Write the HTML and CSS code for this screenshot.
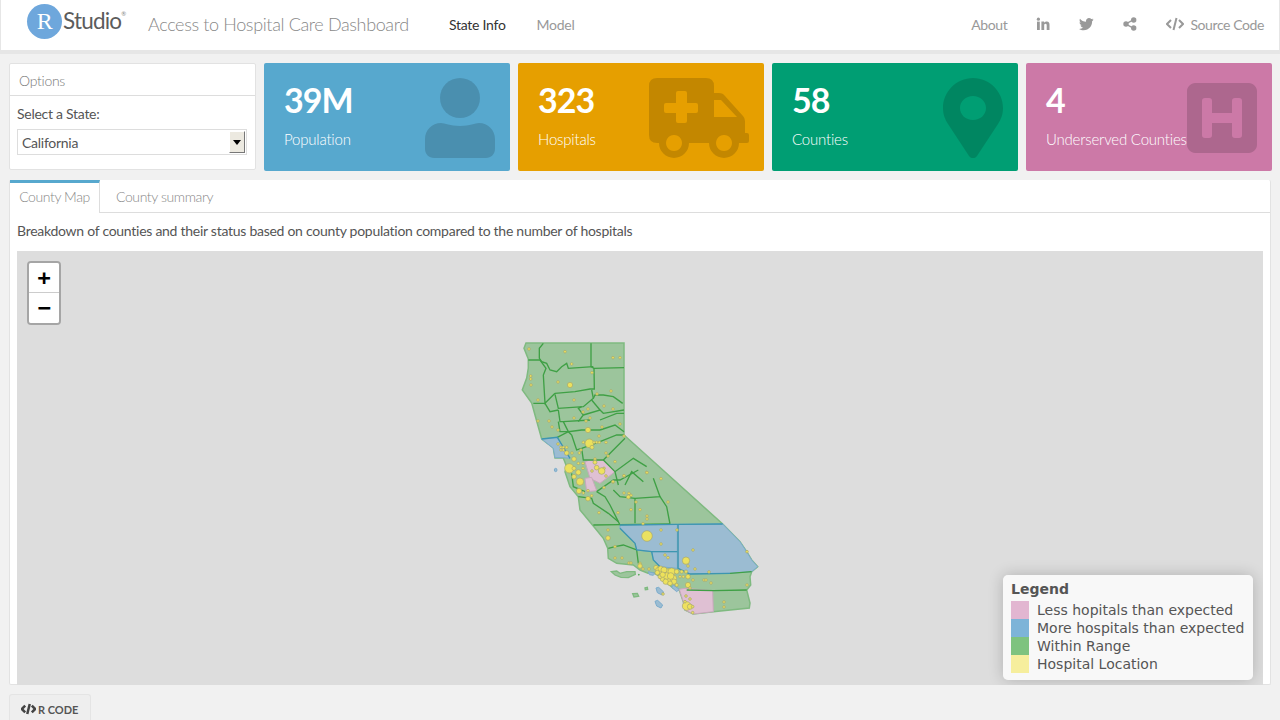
FILE: index.html
```html
<!DOCTYPE html>
<html lang="en">
<head>
<meta charset="utf-8">
<title>Access to Hospital Care Dashboard</title>
<link rel="stylesheet" href="styles.css">
</head>
<body>

<header class="navbar">
  <div class="logo">
    <span class="logo-r">R</span><span class="logo-word">Studio</span><span class="logo-reg">&reg;</span>
  </div>
  <div class="nav-title">Access to Hospital Care Dashboard</div>
  <nav class="nav-left">
    <a class="active">State Info</a>
    <a>Model</a>
  </nav>
  <nav class="nav-right">
    <a>About</a>
    <a class="icon-link">
      <svg width="14" height="14" viewBox="0 0 14 14"><rect x="1" y="4.600" width="2.800" height="8.400"/><circle cx="2.400" cy="2.200" r="1.600"/><path d="M5.400 4.600h2.700v1.200c.5-.8 1.400-1.400 2.600-1.400 2.300 0 2.800 1.500 2.800 3.500V13h-2.800V8.500c0-1-.2-1.800-1.200-1.800-1.100 0-1.300.8-1.300 1.800V13H5.400z"/></svg>
    </a>
    <a class="icon-link">
      <svg width="15" height="14" viewBox="0 0 15 14"><path d="M14.600 2.600c-.5.2-1.100.4-1.700.5.6-.4 1.100-1 1.300-1.700-.6.3-1.200.6-1.900.7C11.700 1.500 10.900 1.100 10 1.100 8.300 1.100 7 2.500 7 4.100c0 .2 0 .5.100.7C4.600 4.700 2.400 3.500 1 1.700.7 2.100.6 2.700.6 3.200c0 1 .5 2 1.300 2.500-.5 0-1-.2-1.400-.4 0 1.500 1 2.700 2.400 3-.5.1-.9.1-1.400.1.400 1.200 1.500 2 2.800 2.100C3.300 11.300 1.800 11.900.2 11.900H0c1.300.8 2.900 1.300 4.600 1.300 5.500 0 8.500-4.600 8.500-8.500V4.300c.6-.4 1.100-1 1.500-1.700z"/></svg>
    </a>
    <a class="icon-link">
      <svg width="14" height="14" viewBox="0 0 14 14"><circle cx="3" cy="7" r="2.700"/><circle cx="10.700" cy="3" r="2.700"/><circle cx="10.700" cy="11" r="2.700"/><path d="M3 6l7.500-4 .6 1.300L3.600 7.300zM3.600 6.700l7.500 4-.6 1.300L3 8z"/></svg>
    </a>
    <a class="source">
      <svg class="code-icon" width="18" height="14" viewBox="0 0 18 14"><path d="M5 3L1 7l4 4M13 3l4 4-4 4M10.500 1L7.500 13"/></svg>
      Source Code
    </a>
  </nav>
</header>

<main class="page">
  <section class="top-row">
    <div class="card options">
      <div class="card-head">Options</div>
      <div class="card-body">
        <label class="field-label">Select a State:</label>
        <div class="select-box">
          <span>California</span>
          <span class="select-btn"></span>
        </div>
      </div>
    </div>

    <div class="value-box blue">
      <div class="value">39M</div>
      <div class="caption">Population</div>
      <svg class="box-icon" width="70" height="80" viewBox="0 0 70 80"><ellipse cx="35" cy="20" rx="20" ry="20"/><path d="M16 45c4 0 9 3 19 3s15-3 19-3c9 0 16 7 16 16v10c0 5-4 9-9 9H9c-5 0-9-4-9-9V61c0-9 7-16 16-16z"/></svg>
    </div>

    <div class="value-box orange">
      <div class="value">323</div>
      <div class="caption">Hospitals</div>
      <svg class="box-icon" width="101" height="80" viewBox="0 0 101 80" fill-rule="evenodd"><path d="M8 0H57q8 0 8 8V15H70q4 0 6 3L94 38q2 2 2 5V55H98q2 0 2 2V63q0 2-2 2H90A15 15 0 0 1 60 65H40A15 15 0 0 1 10 65H8q-8 0-8-8V8q0-8 8-8Z M65 22V39H88L72 22Z M27 15V25H17q-2 0-2 2V33q0 2 2 2H27V43q0 2 2 2H36q2 0 2-2V35H47q2 0 2-2V27q0-2-2-2H38V15q0-2-2-2H29q-2 0-2 2Z M25 57a8 8 0 1 0 .010 0Z M75 57a8 8 0 1 0 .010 0Z"/></svg>
    </div>

    <div class="value-box green">
      <div class="value">58</div>
      <div class="caption">Counties</div>
      <svg class="box-icon" width="60" height="80" viewBox="0 0 60 80" fill-rule="evenodd"><path d="M30 0c17 0 30 14 30 30 0 7-2 11-5 16L34 78c-2 3-6 3-8 0L5 46C2 41 0 37 0 30 0 14 13 0 30 0zM30 18c-7 0-13 5-13 12s6 12 13 12 13-5 13-12-6-12-13-12z"/></svg>
    </div>

    <div class="value-box pink">
      <div class="value">4</div>
      <div class="caption">Underserved Counties</div>
      <svg class="box-icon h-icon" width="70" height="70" viewBox="0 0 70 70" fill-rule="evenodd"><path d="M8 0h54c4 0 8 4 8 8v54c0 4-4 8-8 8H8c-4 0-8-4-8-8V8c0-4 4-8 8-8zM18 15c-2 0-3 1-3 3v34c0 2 1 3 3 3h4c2 0 3-1 3-3V40h20v12c0 2 1 3 3 3h4c2 0 3-1 3-3V18c0-2-1-3-3-3h-4c-2 0-3 1-3 3v12H25V18c0-2-1-3-3-3z"/></svg>
    </div>
  </section>

  <section class="tab-box">
    <div class="tabs">
      <a class="tab active">County Map</a>
      <a class="tab">County summary</a>
    </div>
    <div class="tab-body">
      <p class="blurb">Breakdown of counties and their status based on county population compared to the number of hospitals</p>
      <div class="map">

        <svg class="state" viewBox="17 251 1246 434" width="1246" height="434">
          <path class="land" d="M526 343L624 343L624 435L722.700 524L740 541.700L746.700 551.700L751.700 560L757.700 566.700L751.700 571.700L750 576.700L750.700 585L746.700 590L750 603L749.300 608L713.300 611.700L693.300 614L685 610L683.300 601.700L679.300 590L673.300 588.300L660 576.700L653.300 572.700L648 573.300L640 570L633.300 565L616.700 563.300L608.300 558.300L607.700 548.300L603.300 538.300L593.300 526L580 510L578.300 496.700L570 486.700L565 471.700L566.700 466.700L563.300 458L555 458L553.300 448L541.700 439L535 415L531.700 403L522.300 390L526.700 378L528.300 368L528.300 359L524 348.300Z"/>

          <g transform="translate(500 335) scale(.33333)">
            <path class="under" d="M125 312L172 307L195 345L210 370L190 368L165 368L160 340Z"/>
            <path class="over" d="M255 380L270 375L310 375L345 410L300 445L270 430Z"/>
            <ellipse class="under" cx="167" cy="405" rx="4" ry="5"/>
            <g class="lines">
              <path d="M130 25L118 40L118 70L125 80L140 85L150 105L170 110L185 95L200 85L205 100L280 95"/>
              <path d="M273 25L273 95L282 100L372 98"/>
              <path d="M282 100L283 162L270 162L225 170L165 175"/>
              <path d="M85 75L120 75L138 100L130 120L135 205L165 175"/>
              <path d="M165 178L175 220L250 215L280 190L275 165"/>
              <path d="M280 190L285 180L310 180L340 185L368 205"/>
              <path d="M100 205L135 205L150 230L175 225"/>
              <path d="M175 225L180 260L190 260L270 255"/>
              <path d="M175 260L180 290L205 290L215 300"/>
              <path d="M190 260L205 290L245 285L300 285"/>
              <path d="M245 215L235 220L250 240L235 260"/>
              <path d="M250 240L300 225L310 235L372 225"/>
              <path d="M300 225L275 195"/>
              <path d="M300 255L350 235L372 235"/>
              <path d="M300 285L345 270L372 290"/>
              <path d="M172 307L205 290"/>
              <path d="M215 300L230 345L245 340L300 320L350 300L372 300"/>
              <path d="M245 340L250 375L310 375L340 345L375 310"/>
              <path d="M310 375L345 410L400 370L440 395"/>
              <path d="M345 410L355 450"/>
              <path d="M375 450L395 410L430 440"/>
            </g>
            <path class="blue-line" d="M125 312L172 307L195 345L210 370"/>
          </g>

          <g transform="translate(520 470) scale(.33333)">
            <path class="under" d="M300 165L472 163L472 245L395 245L350 240L345 220L300 175Z"/>
            <path class="under" d="M475 163L608 162L660 215L680 245L695 270L713 290L695 305L630 310L510 312L475 295Z"/>
            <path class="under" d="M395 245L472 245L472 295L420 290L400 270Z"/>
            <path class="under" d="M385 305L405 310L400 316L388 314Z"/>
            <path class="under" d="M460 345L478 358L470 365L455 352Z"/>
            <path class="over" d="M478 358L495 355L578 362L580 425L520 432L495 420L490 395Z"/>
            <path class="over" d="M195 25L215 22L230 62L200 65Z"/>
            <path class="under" d="M408 354L416 352L431 366L426 375L412 368Z"/>
            <path class="under" d="M405 394L413 391L428 405L423 414L410 408Z"/>
            <path class="land" d="M274 305L290 303L300 310L320 305L345 305L346 313L325 323L303 322L285 315Z"/>
            <path class="land" d="M338 371L352 370L356 379L342 381Z"/>
            <path class="land" d="M375 354L382 352L383 358L376 359Z"/>
            <g class="lines">
              <path d="M155 10L160 50L195 65"/>
              <path d="M230 65L255 80L270 105L295 155"/>
              <path d="M230 65L280 30L300 30L355 0"/>
              <path d="M280 60L300 80L345 85L420 80L400 25"/>
              <path d="M345 85L345 160"/>
              <path d="M420 80L440 110L450 162"/>
              <path d="M175 80L215 85L220 100L265 130L295 155L300 165"/>
              <path d="M220 165L300 164L450 162"/>
              <path d="M265 235L285 230L310 225L350 240"/>
              <path d="M350 240L355 280"/>
              <path d="M500 360L580 362L680 360"/>
              <path d="M630 310L695 305"/>
              <path d="M355 316L358 313"/>
            </g>
            <g class="blue-line">
              <path d="M300 165L472 163L608 162"/>
              <path d="M300 175L345 220L350 240L395 245L472 245"/>
              <path d="M474 163L474 295L510 312L630 310"/>
              <path d="M395 245L400 270L420 290"/>
            </g>
          </g>

          <g class="dots" transform="translate(500 335) scale(.33333)">
            <circle cx="87" cy="42" r="4"/><circle cx="195" cy="50" r="4"/><circle cx="339" cy="68" r="4"/><circle cx="360" cy="68" r="4"/><circle cx="215" cy="87" r="4"/><circle cx="276" cy="113" r="4"/><circle cx="92" cy="123" r="4"/><circle cx="92" cy="132" r="4"/><circle cx="93" cy="150" r="4"/><circle cx="174" cy="141" r="4"/><circle cx="210" cy="150" r="8"/><circle cx="333" cy="168" r="4"/><circle cx="291" cy="177" r="4"/><circle cx="222" cy="195" r="4"/><circle cx="114" cy="195" r="4"/><circle cx="312" cy="213" r="4"/><circle cx="339" cy="222" r="4"/><circle cx="264" cy="222" r="4"/><circle cx="249" cy="231" r="4"/><circle cx="222" cy="249" r="4"/><circle cx="270" cy="249" r="4"/><circle cx="114" cy="258" r="4"/><circle cx="147" cy="258" r="4"/><circle cx="258" cy="258" r="4"/><circle cx="156" cy="276" r="4"/><circle cx="306" cy="276" r="4"/><circle cx="360" cy="267" r="4"/><circle cx="174" cy="285" r="4"/><circle cx="264" cy="285" r="8"/><circle cx="297" cy="303" r="4"/><circle cx="372" cy="303" r="4"/><circle cx="174" cy="327" r="4"/><circle cx="250" cy="322" r="4"/><circle cx="268" cy="325" r="13"/><circle cx="282" cy="322" r="4"/><circle cx="290" cy="322" r="4"/><circle cx="298" cy="322" r="4"/><circle cx="318" cy="322" r="4"/><circle cx="276" cy="337" r="6"/><circle cx="183" cy="337" r="4"/><circle cx="190" cy="337" r="4"/><circle cx="183" cy="345" r="4"/><circle cx="190" cy="345" r="4"/><circle cx="200" cy="337" r="4"/><circle cx="243" cy="345" r="4"/><circle cx="238" cy="354" r="4"/><circle cx="200" cy="354" r="7"/><circle cx="216" cy="354" r="4"/><circle cx="318" cy="354" r="4"/><circle cx="324" cy="363" r="4"/><circle cx="222" cy="372" r="7"/><circle cx="285" cy="372" r="4"/><circle cx="285" cy="382" r="6"/><circle cx="345" cy="380" r="4"/><circle cx="290" cy="398" r="7"/><circle cx="312" cy="400" r="4"/><circle cx="305" cy="408" r="10"/><circle cx="276" cy="408" r="4"/><circle cx="208" cy="400" r="14"/><circle cx="222" cy="400" r="6"/><circle cx="235" cy="385" r="4"/><circle cx="249" cy="385" r="4"/><circle cx="249" cy="400" r="4"/><circle cx="235" cy="412" r="8"/><circle cx="222" cy="425" r="7"/><circle cx="240" cy="440" r="11"/><circle cx="372" cy="423" r="4"/><circle cx="440" cy="412" r="4"/><circle cx="318" cy="423" r="4"/><circle cx="339" cy="441" r="4"/>
          </g>
          <g class="dots" transform="translate(520 470) scale(.33333)">
            <circle cx="312" cy="17" r="4"/><circle cx="381" cy="8" r="4"/><circle cx="423" cy="26" r="4"/><circle cx="279" cy="35" r="4"/><circle cx="252" cy="53" r="4"/><circle cx="177" cy="63" r="8"/><circle cx="204" cy="62" r="4"/><circle cx="190" cy="69" r="4"/><circle cx="204" cy="86" r="7"/><circle cx="215" cy="77" r="4"/><circle cx="312" cy="69" r="4"/><circle cx="327" cy="70" r="4"/><circle cx="333" cy="76" r="4"/><circle cx="325" cy="81" r="6"/><circle cx="348" cy="96" r="4"/><circle cx="444" cy="96" r="4"/><circle cx="237" cy="128" r="4"/><circle cx="294" cy="128" r="4"/><circle cx="333" cy="119" r="4"/><circle cx="360" cy="119" r="4"/><circle cx="381" cy="138" r="4"/><circle cx="381" cy="147" r="4"/><circle cx="369" cy="161" r="4"/><circle cx="264" cy="180" r="4"/><circle cx="381" cy="198" r="16"/><circle cx="423" cy="180" r="4"/><circle cx="471" cy="180" r="4"/><circle cx="264" cy="204" r="7"/><circle cx="423" cy="222" r="4"/><circle cx="285" cy="230" r="4"/><circle cx="519" cy="240" r="4"/><circle cx="681" cy="245" r="4"/><circle cx="435" cy="255" r="4"/><circle cx="444" cy="263" r="4"/><circle cx="285" cy="264" r="4"/><circle cx="306" cy="264" r="4"/><circle cx="498" cy="272" r="11"/><circle cx="327" cy="279" r="4"/><circle cx="333" cy="279" r="4"/><circle cx="360" cy="280" r="4"/><circle cx="360" cy="288" r="7"/><circle cx="369" cy="297" r="4"/><circle cx="387" cy="297" r="4"/><circle cx="504" cy="288" r="4"/><circle cx="525" cy="297" r="4"/><circle cx="567" cy="306" r="4"/>
            <circle cx="408" cy="293" r="7"/><circle cx="415" cy="300" r="8"/><circle cx="425" cy="305" r="9"/><circle cx="435" cy="310" r="9"/><circle cx="445" cy="305" r="9"/><circle cx="455" cy="305" r="11"/><circle cx="470" cy="305" r="7"/><circle cx="485" cy="305" r="5"/><circle cx="498" cy="305" r="5"/><circle cx="504" cy="320" r="7"/><circle cx="430" cy="325" r="10"/><circle cx="445" cy="332" r="11"/><circle cx="460" cy="325" r="10"/><circle cx="462" cy="335" r="8"/><circle cx="470" cy="345" r="5"/><circle cx="490" cy="320" r="4"/><circle cx="480" cy="320" r="4"/><circle cx="420" cy="320" r="6"/><circle cx="412" cy="308" r="7"/><circle cx="422" cy="296" r="8"/><circle cx="432" cy="300" r="9"/><circle cx="440" cy="318" r="10"/><circle cx="452" cy="318" r="10"/><circle cx="428" cy="314" r="8"/><circle cx="437" cy="335" r="8"/><circle cx="450" cy="340" r="7"/>
            <circle cx="519" cy="330" r="4"/><circle cx="552" cy="330" r="4"/><circle cx="558" cy="330" r="4"/><circle cx="573" cy="339" r="4"/><circle cx="504" cy="345" r="8"/><circle cx="510" cy="354" r="4"/><circle cx="681" cy="345" r="4"/><circle cx="429" cy="372" r="4"/><circle cx="498" cy="378" r="4"/><circle cx="510" cy="387" r="4"/><circle cx="612" cy="396" r="4"/><circle cx="612" cy="411" r="4"/><circle cx="500" cy="408" r="13"/><circle cx="510" cy="410" r="8"/><circle cx="518" cy="410" r="4"/><circle cx="495" cy="395" r="4"/><circle cx="518" cy="428" r="4"/>
          </g>
        </svg>

        <div class="zoom-ctl">
          <a class="zoom-btn">+</a>
          <a class="zoom-btn">&minus;</a>
        </div>

        <div class="legend">
          <div class="legend-title">Legend</div>
          <div class="legend-row"><i class="sw sw-pink"></i>Less hopitals than expected</div>
          <div class="legend-row"><i class="sw sw-blue"></i>More hospitals than expected</div>
          <div class="legend-row"><i class="sw sw-green"></i>Within Range</div>
          <div class="legend-row"><i class="sw sw-yellow"></i>Hospital Location</div>
        </div>
      </div>
    </div>
  </section>

  <a class="r-code">
    <svg class="code-icon" width="15" height="12" viewBox="0 0 18 14"><path d="M5 3L1 7l4 4M13 3l4 4-4 4M10.500 1L7.500 13"/></svg>
    <span>R CODE</span>
  </a>
</main>

</body>
</html>
```

FILE: styles.css
```css
html, body { margin:0; padding:0; height:720px; overflow:hidden; }
body { background:#f1f1f1; font-family:"Lato", "Open Sans", sans-serif; font-size:14px; letter-spacing:-.27px; color:#555; }
a { text-decoration:none; color:inherit; }

/* top bar */
.navbar { display:flex; align-items:center; height:48px; padding-bottom:2px; box-sizing:content-box; background:#fff; border:1px solid #e6e6e6; border-width:0 1px 4px 1px; }
.logo { display:flex; align-items:center; margin-left:26px; width:121px; height:50px; color:#666; }
.logo-r { display:flex; justify-content:center; align-items:center; width:35px; height:35px; margin-top:-6px; border-radius:50%; background:#6ea7dc; color:#fff; font-family:"Liberation Serif", serif; font-size:24px; }
.logo-word { margin:-7px 0 0 1px; font-size:22.500px; letter-spacing:-.8px; color:#5c5c5c; }
.logo-reg { font-size:6px; margin:-22px 0 0 0; color:#888; }
.nav-title { width:301px; font-size:18px; letter-spacing:-.36px; font-weight:300; color:#888; white-space:nowrap; }
.nav-left { display:flex; gap:31px; color:#999; }
.nav-left .active { color:#333; }
.nav-right { display:flex; align-items:center; margin-left:auto; margin-right:15px; color:#999; letter-spacing:-.4px; }
.nav-right a { margin-left:29px; }
.nav-right svg { display:block; fill:#999; }
.nav-right .source { display:flex; align-items:center; gap:6px; margin-left:29px; }
.code-icon { flex:none; fill:none !important; stroke:#999; stroke-width:2; }

/* page */
.page { padding:9px 8px 0; }
.top-row { display:flex; gap:8px; height:108px; }

.card { box-sizing:border-box; width:247px; background:#fff; border:1px solid #e2e2e2; border-radius:2px; margin:0 0 0 1px; height:107px; }
.card-head { padding:8px 9px 0; height:32px; box-sizing:border-box; border-bottom:1px solid #ddd; font-weight:300; color:#777; }
.card-body { padding:9px 7px; }
.field-label { display:block; margin-bottom:7px; }
.select-box { display:flex; justify-content:space-between; align-items:center; box-sizing:border-box; height:26px; margin-right:1px; border:1px solid #ddd; padding:0 1px 0 4px; }
.select-btn { position:relative; box-sizing:border-box; width:16px; height:22px; background:#ece9e0; border:1px solid; border-color:#fff #777 #777 #fff; }
.select-btn::after { content:""; position:absolute; left:3px; top:8px; border:4px solid transparent; border-top:5px solid #000; border-bottom:0; }

.value-box { position:relative; box-sizing:border-box; width:246px; padding:17px 20px; border-radius:2px; color:#fff; overflow:hidden; }
.value { font-size:34px; letter-spacing:-1px; font-weight:700; line-height:40px; }
.caption { margin-top:9px; font-size:15px; letter-spacing:-.2px; font-weight:300; line-height:20px; }
.box-icon { position:absolute; right:15px; top:15px; fill:rgba(0,0,0,.15); }
.h-icon { top:20px; }
.blue { background:#57a8ce; }
.orange { background:#e69f00; }
.orange .box-icon { right:14px; }
.green { background:#009e73; }
.pink { background:#cc79a7; }

/* tabs */
.tab-box { box-sizing:border-box; height:505px; margin:9px 0 0 1px; width:1262px; background:#fff; border:1px solid #e2e2e2; border-top:0; border-radius:2px; }
.tabs { display:flex; height:33px; box-sizing:border-box; border-bottom:1px solid #ddd; color:#888; font-weight:300; letter-spacing:-.4px; }
.tab { box-sizing:border-box; height:33px; padding:8px 16px 0; }
.tab.active { width:90px; padding:5px 0 0; text-align:center; background:#fff; border-top:3px solid #57a8ce; border-right:1px solid #ddd; }
.tab-body { padding:0 7px; }
.blurb { margin:0; padding-top:9px; height:38px; box-sizing:border-box; }

.map { position:relative; height:434px; background:#ddd; overflow:hidden; letter-spacing:0; }
.state { position:absolute; left:0; top:0; }
.land { fill:#9cc59c; stroke:#7fba80; stroke-width:1.500; }
.state g .land { stroke-width:4; }
.under { fill:#9bbcd2; stroke:#7aaccc; stroke-width:3; }
.over { fill:#dfc0d3; stroke:#c8a8bc; stroke-width:3; }
.lines path { fill:none; stroke:#3fa045; stroke-width:4; }
.blue-line, .blue-line path { fill:none; stroke:#3d96b0; stroke-width:4; }
.dots circle { fill:#efe35a; fill-opacity:.95; stroke:#a8a86e; stroke-opacity:.7; stroke-width:3; }

.zoom-ctl { position:absolute; left:10px; top:10px; border:2px solid rgba(0,0,0,.25); border-radius:4px; }
.zoom-btn { display:block; width:30px; height:30px; background:#fff; color:#000; font:bold 22px/30px "DejaVu Sans Mono", monospace; text-align:center; }
.zoom-btn:first-child { border-bottom:1px solid #ccc; border-radius:2px 2px 0 0; height:29px; line-height:29px; }
.zoom-btn:last-child { border-radius:0 0 2px 2px; }

.legend { position:absolute; right:10px; bottom:5px; box-sizing:border-box; width:250px; height:105px; padding:6px 8px; border-radius:5px; background:rgba(255,255,255,.8); box-shadow:0 0 15px rgba(0,0,0,.2); font:14px/18px "DejaVu Sans", sans-serif; color:#555; }
.legend-title { font-weight:bold; line-height:16px; margin-bottom:4px; }
.legend-row { display:flex; height:18px; }
.sw { display:block; width:18px; height:18px; margin-right:8px; }
.sw-pink { background:#e2b6d1; }
.sw-blue { background:#7db4d8; }
.sw-green { background:#7ec37f; }
.sw-yellow { background:#f6ee9d; }

.r-code { display:inline-flex; align-items:center; gap:2px; box-sizing:border-box; height:32px; width:82px; margin:9px 0 0 1px; padding:0 11px; background:#eee; border:1px solid #e4e4e4; border-bottom:3px solid #ddd; border-radius:3px; font-size:11px; letter-spacing:0; font-weight:700; color:#555; white-space:nowrap; }
.r-code .code-icon { stroke:#444; stroke-width:3; }
```
